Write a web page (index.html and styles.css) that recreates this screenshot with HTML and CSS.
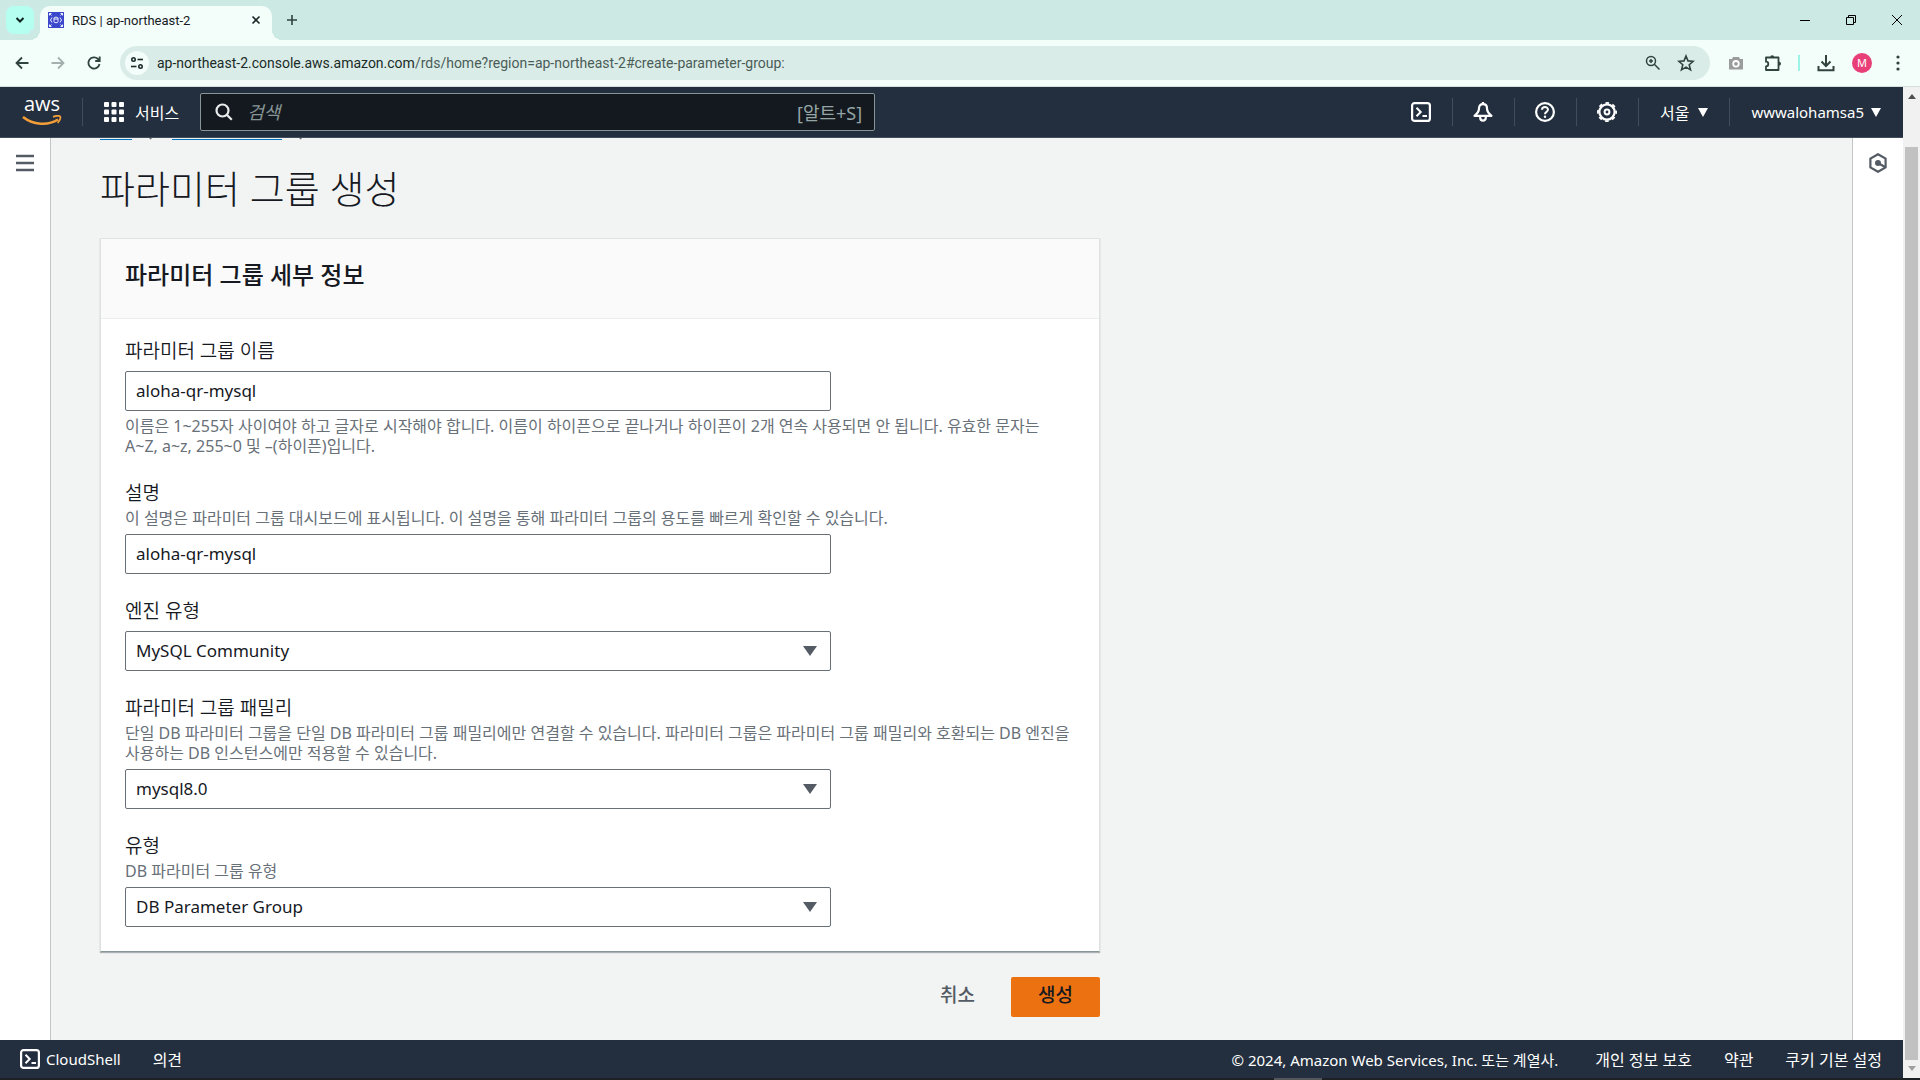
FILE: index.html
```html
<!DOCTYPE html>
<html lang="ko">
<head>
    <meta charset="UTF-8">
    <meta name="viewport" content="width=device-width, initial-scale=1.0">
    <title>RDS | ap-northeast-2</title>
    <link rel="stylesheet" href="styles.css">
</head>
<body>
    <!-- Browser tabs -->
    <div class="tab-strip">
        <button class="tab-search" aria-label="탭 검색">
            <svg width="10" height="10" viewBox="0 0 10 10"><path d="M1.5 3l3.500 3.500L8.500 3" fill="none" stroke="#10231f" stroke-width="2"/></svg>
        </button>
        <div class="tab">
            <svg width="16" height="16" viewBox="0 0 16 16">
                <rect width="16" height="16" fill="#3b48cc"/>
                <g fill="none" stroke="#fff">
                    <path d="M1.500 3.500v-2h2M12.500 1.500h2v2M14.500 12.500v2h-2M3.500 14.500h-2v-2M1.500 1.500l2 2M14.500 1.500l-2 2M14.500 14.500l-2-2M1.500 14.500l2-2" stroke-width=".9"/>
                    <path d="M4 5.500L2.500 8 4 10.500M12 5.500L13.500 8 12 10.500" stroke-width=".9"/>
                    <ellipse cx="8" cy="6.200" rx="2" ry="1" stroke-width=".9"/>
                    <path d="M6 6.200v3.600c0 1.300 4 1.300 4 0V6.200" stroke-width=".9"/>
                </g>
            </svg>
            <span class="tab-title">RDS | ap-northeast-2</span>
            <button class="icon-btn" aria-label="탭 닫기">
                <svg width="10" height="10" viewBox="0 0 10 10"><path d="M1.500 1.500l7 7M8.500 1.500l-7 7" stroke="#1b2b28" stroke-width="1.600"/></svg>
            </button>
        </div>
        <button class="icon-btn new-tab" aria-label="새 탭">
            <svg width="12" height="12" viewBox="0 0 12 12"><path d="M6 1v10M1 6h10" stroke="#30433f" stroke-width="1.600"/></svg>
        </button>
        <div class="window-controls">
            <button class="icon-btn" aria-label="최소화">
                <svg width="12" height="12" viewBox="0 0 12 12"><path d="M1 6.500h10" stroke="#000"/></svg>
            </button>
            <button class="icon-btn" aria-label="이전 크기로 복원">
                <svg width="12" height="12" viewBox="0 0 12 12"><path d="M1.500 3.500h7v7h-7zM3.500 3V1.500h7v7H9" fill="none" stroke="#000"/></svg>
            </button>
            <button class="icon-btn" aria-label="닫기">
                <svg width="12" height="12" viewBox="0 0 12 12"><path d="M1 1l10 10M11 1L1 11" stroke="#000"/></svg>
            </button>
        </div>
    </div>

    <!-- Address bar -->
    <div class="toolbar">
        <div class="nav-buttons">
            <button class="icon-btn" aria-label="뒤로">
                <svg width="16" height="16" viewBox="0 0 16 16"><path d="M14.500 8H3M8 2.500L2.500 8 8 13.500" fill="none" stroke="#30433f" stroke-width="1.800"/></svg>
            </button>
            <button class="icon-btn" aria-label="앞으로">
                <svg width="16" height="16" viewBox="0 0 16 16"><path d="M1.500 8H13M8 2.500L13.500 8 8 13.500" fill="none" stroke="#a3b0ad" stroke-width="1.800"/></svg>
            </button>
            <button class="icon-btn" aria-label="새로고침">
                <svg width="16" height="16" viewBox="0 0 16 16"><path d="M13.500 9A5.600 5.600 0 1 1 12 4l1.500 1.500M13.700 1.500v4.500H9.200" fill="none" stroke="#30433f" stroke-width="1.800"/></svg>
            </button>
        </div>
        <div class="address">
            <button class="site-info" aria-label="사이트 정보 보기">
                <svg width="14" height="14" viewBox="0 0 14 14"><g fill="none" stroke="#1b2b28" stroke-width="1.600"><circle cx="3.500" cy="3.500" r="1.700"/><path d="M7.500 3.500H13"/><circle cx="10.500" cy="10.500" r="1.700"/><path d="M1 10.500h5.500"/></g></svg>
            </button>
            <span class="url"><span class="host">ap-northeast-2.console.aws.amazon.com</span>/rds/home?region=ap-northeast-2#create-parameter-group:</span>
            <button class="icon-btn" aria-label="확대/축소">
                <svg width="16" height="16" viewBox="0 0 16 16"><g fill="none" stroke="#30433f" stroke-width="1.500"><circle cx="6" cy="6" r="4.500"/><path d="M9.300 9.300l5.200 5.200M6 4v4M4 6h4"/></g></svg>
            </button>
            <button class="icon-btn" aria-label="북마크에 추가">
                <svg width="18" height="18" viewBox="0 0 18 18"><path d="M9 2l2 4.900 5.200.4-4 3.400 1.300 5.200L9 13.100l-4.500 2.800 1.300-5.200-4-3.400L7 6.900z" fill="none" stroke="#30433f" stroke-width="1.600"/></svg>
            </button>
        </div>
        <button class="icon-btn camera" aria-label="화면 캡처">
            <svg width="16" height="16" viewBox="0 0 16 16"><path d="M1 4h3l1-2h6l1 2h3v10.500H1z" fill="#9a9d9c"/><circle cx="8" cy="8.800" r="2.800" fill="#9a9d9c" stroke="#fff" stroke-width="1.800"/></svg>
        </button>
        <button class="icon-btn puzzle" aria-label="확장 프로그램">
            <svg width="18" height="18" viewBox="0 0 18 18"><path d="M2 3.500h12.500V16H2v-3.700a2.300 2.300 0 0 0 0-4.600z" fill="none" stroke="#30433f" stroke-width="1.800" stroke-linejoin="round"/><path d="M6.200 3.200a2 2 0 0 1 4 0zM15 7.700a2 2 0 0 1 0 4z" fill="#30433f"/></svg>
        </button>
        <span class="toolbar-divider"></span>
        <button class="icon-btn download" aria-label="다운로드">
            <svg width="18" height="18" viewBox="0 0 18 18"><path d="M9 1v10.500M4.500 7.500L9 12l4.500-4.500M1.500 12v4.200h15V12" fill="none" stroke="#30433f" stroke-width="2"/></svg>
        </button>
        <button class="profile" aria-label="프로필">M</button>
        <button class="icon-btn" aria-label="Chrome 맞춤설정">
            <svg width="4" height="16" viewBox="0 0 4 16" fill="#30433f"><circle cx="2" cy="2" r="1.600"/><circle cx="2" cy="8" r="1.600"/><circle cx="2" cy="14" r="1.600"/></svg>
        </button>
    </div>

    <div class="viewport">
        <div class="console">
            <!-- AWS header -->
            <header class="aws-nav">
                <a href="#" class="aws-logo" aria-label="AWS">
                    <span class="aws-word">aws</span>
                    <svg width="40" height="12" viewBox="0 0 40 12"><path d="M1 2c10 8 25 9 35 2.500" fill="none" stroke="#f29d38" stroke-width="2.600"/><path d="M31 1.800c3-1 6-1.300 7-.4s0 4-2.300 6.600" fill="none" stroke="#f29d38" stroke-width="1.800"/></svg>
                </a>
                <span class="nav-divider"></span>
                <button class="services">
                    <svg width="20" height="20" viewBox="0 0 20 20" fill="#fff"><rect width="5" height="5" rx="1"/><rect x="7.500" width="5" height="5" rx="1"/><rect x="15" width="5" height="5" rx="1"/><rect y="7.500" width="5" height="5" rx="1"/><rect x="7.500" y="7.500" width="5" height="5" rx="1"/><rect x="15" y="7.500" width="5" height="5" rx="1"/><rect y="15" width="5" height="5" rx="1"/><rect x="7.500" y="15" width="5" height="5" rx="1"/><rect x="15" y="15" width="5" height="5" rx="1"/></svg>
                    서비스
                </button>
                <label class="search">
                    <svg width="18" height="18" viewBox="0 0 18 18"><g fill="none" stroke="#eaeded" stroke-width="2.200"><circle cx="7.500" cy="7.500" r="6"/><path d="M11.800 11.800l5 5"/></g></svg>
                    <input type="text" placeholder="검색" aria-label="검색">
                    <span class="shortcut">[알트+S]</span>
                </label>
                <div class="nav-tools">
                    <button class="tool" aria-label="CloudShell">
                        <svg width="20" height="20" viewBox="0 0 20 20"><g fill="none" stroke="#fff" stroke-width="2.200"><rect x="1.100" y="1.100" width="17.800" height="17.800" rx="2.500"/><path d="M5.500 5.800l4.200 4.200-4.200 4.200" stroke-width="2"/><path d="M11.500 14h4.500" stroke-width="2"/></g></svg>
                    </button>
                    <button class="tool" aria-label="알림">
                        <svg width="20" height="20" viewBox="0 0 20 20"><g fill="none" stroke="#fff" stroke-width="2.200" stroke-linejoin="round"><path d="M10 2.200c-2.600 0-4 1.600-4 4.200 0 3.200-1.600 5-4.500 7.400h17c-2.900-2.400-4.500-4.200-4.500-7.400 0-2.600-1.400-4.200-4-4.200z"/><path d="M7.200 14.500v1.200c0 3.800 5.600 3.800 5.600 0v-1.200M10 0v2"/></g></svg>
                    </button>
                    <button class="tool" aria-label="도움말">
                        <svg width="20" height="20" viewBox="0 0 20 20"><circle cx="10" cy="10" r="8.900" fill="none" stroke="#fff" stroke-width="2.200"/><path d="M7 7.800C7 4.200 13 4.200 13 7.600c0 2.400-3 2.100-3 4.600" fill="none" stroke="#fff" stroke-width="2"/><circle cx="10" cy="14.700" r="1.200" fill="#fff"/></svg>
                    </button>
                    <button class="tool" aria-label="설정">
                        <svg width="20" height="20" viewBox="0 0 20 20"><circle cx="10" cy="10" r="7.600" fill="none" stroke="#fff" stroke-width="2.200"/><circle cx="10" cy="10" r="9.100" fill="none" stroke="#fff" stroke-width="1.800" stroke-dasharray="3.600 3.547" stroke-dashoffset="1.800"/><circle cx="10" cy="10" r="2.400" fill="none" stroke="#fff" stroke-width="2"/></svg>
                    </button>
                    <button class="menu region">서울
                        <svg width="10" height="9" viewBox="0 0 10 9"><path d="M0 0h10L5 9z" fill="#fff"/></svg>
                    </button>
                    <button class="menu account">wwwalohamsa5
                        <svg width="10" height="9" viewBox="0 0 10 9"><path d="M0 0h10L5 9z" fill="#fff"/></svg>
                    </button>
                </div>
            </header>

            <div class="workspace">
                <aside class="rail rail-left">
                    <button class="icon-btn" aria-label="탐색 열기">
                        <svg width="18" height="18" viewBox="0 0 18 18"><path d="M0 2h18M0 9h18M0 16h18" stroke="#545b64" stroke-width="2.400"/></svg>
                    </button>
                </aside>

                <main class="content">
                    <nav class="breadcrumb" aria-label="이동 경로">
                        <a href="#" class="crumb-home" aria-label="RDS"></a>
                        <svg width="8" height="12" viewBox="0 0 8 12"><path d="M2 1l4 5-4 5" fill="none" stroke="#687078" stroke-width="2"/></svg>
                        <a href="#" class="crumb-groups" aria-label="파라미터 그룹"></a>
                        <svg width="8" height="12" viewBox="0 0 8 12"><path d="M2 1l4 5-4 5" fill="none" stroke="#687078" stroke-width="2"/></svg>
                    </nav>
                    <h1>파라미터 그룹 생성</h1>

                    <form class="group-form">
                        <section class="card">
                            <h2>파라미터 그룹 세부 정보</h2>
                            <div class="card-body">
                                <div class="field">
                                    <label for="groupName">파라미터 그룹 이름</label>
                                    <input type="text" id="groupName" value="aloha-qr-mysql">
                                    <p class="hint">이름은 1~255자 사이여야 하고 글자로 시작해야 합니다. 이름이 하이픈으로 끝나거나 하이픈이 2개 연속 사용되면 안 됩니다. 유효한 문자는 A~Z, a~z, 255~0 및 –(하이픈)입니다.</p>
                                </div>
                                <div class="field">
                                    <label for="description">설명</label>
                                    <p class="hint">이 설명은 파라미터 그룹 대시보드에 표시됩니다. 이 설명을 통해 파라미터 그룹의 용도를 빠르게 확인할 수 있습니다.</p>
                                    <input type="text" id="description" value="aloha-qr-mysql">
                                </div>
                                <div class="field">
                                    <label for="engine">엔진 유형</label>
                                    <div class="select">
                                        <select id="engine"><option>MySQL Community</option></select>
                                        <svg width="14" height="10" viewBox="0 0 14 10"><path d="M0 0h14L7 10z" fill="#545b64"/></svg>
                                    </div>
                                </div>
                                <div class="field">
                                    <label for="family">파라미터 그룹 패밀리</label>
                                    <p class="hint">단일 DB 파라미터 그룹을 단일 DB 파라미터 그룹 패밀리에만 연결할 수 있습니다. 파라미터 그룹은 파라미터 그룹 패밀리와 호환되는 DB 엔진을 사용하는 DB 인스턴스에만 적용할 수 있습니다.</p>
                                    <div class="select">
                                        <select id="family"><option>mysql8.0</option></select>
                                        <svg width="14" height="10" viewBox="0 0 14 10"><path d="M0 0h14L7 10z" fill="#545b64"/></svg>
                                    </div>
                                </div>
                                <div class="field">
                                    <label for="groupType">유형</label>
                                    <p class="hint">DB 파라미터 그룹 유형</p>
                                    <div class="select">
                                        <select id="groupType"><option>DB Parameter Group</option></select>
                                        <svg width="14" height="10" viewBox="0 0 14 10"><path d="M0 0h14L7 10z" fill="#545b64"/></svg>
                                    </div>
                                </div>
                            </div>
                        </section>
                        <div class="actions">
                            <button type="button" class="btn">취소</button>
                            <button type="button" class="btn btn-primary">생성</button>
                        </div>
                    </form>
                </main>

                <aside class="rail rail-right">
                    <button class="icon-btn" aria-label="도구 열기">
                        <svg width="20" height="20" viewBox="0 0 20 20"><path d="M10 1.200l7.600 4.400v8.800L10 18.800l-7.600-4.400V5.600z" fill="none" stroke="#545b64" stroke-width="2.200"/><circle cx="10" cy="10" r="3" fill="#545b64"/><path d="M10 10l7 4" stroke="#545b64" stroke-width="2.200"/></svg>
                    </button>
                </aside>
            </div>

            <footer class="aws-footer">
                <button class="cloudshell">
                    <svg width="20" height="20" viewBox="0 0 20 20"><g fill="none" stroke="#fff" stroke-width="2.200"><rect x="1.100" y="1.100" width="17.800" height="17.800" rx="2.500"/><path d="M5.500 5.800l4.200 4.200-4.200 4.200" stroke-width="2"/><path d="M11.500 14h4.500" stroke-width="2"/></g></svg>
                    CloudShell
                </button>
                <a href="#">의견</a>
                <span class="copyright">© 2024, Amazon Web Services, Inc. 또는 계열사.</span>
                <a href="#">개인 정보 보호</a>
                <a href="#">약관</a>
                <a href="#">쿠키 기본 설정</a>
            </footer>
        </div>

        <div class="scrollbar">
            <svg width="8" height="5" viewBox="0 0 8 5"><path d="M0 5h8L4 0z" fill="#505050"/></svg>
            <div class="thumb"></div>
            <svg width="8" height="5" viewBox="0 0 8 5"><path d="M0 0h8L4 5z" fill="#a0a0a0"/></svg>
        </div>
    </div>

    <div class="taskbar"><span></span></div>
</body>
</html>
```
FILE: styles.css
```css
* {
    box-sizing: border-box;
}
body {
    margin: 0;
    height: 100vh;
    display: flex;
    flex-direction: column;
    overflow: hidden;
    background: #f3fdf9;
    color: #16191f;
    font-family: "Noto Sans", "Noto Sans CJK KR", sans-serif;
    font-size: 16px;
}
button, input, select {
    font: inherit;
    color: inherit;
}
button {
    border: none;
    padding: 0;
    background: none;
    cursor: pointer;
}
svg {
    display: block;
    flex: none;
}
.icon-btn {
    display: flex;
    align-items: center;
    justify-content: center;
}

/* Browser tabs */
.tab-strip {
    flex: none;
    height: 40px;
    display: flex;
    align-items: center;
    background: #cde9e3;
}
.tab-search {
    width: 28px;
    height: 28px;
    margin-left: 6px;
    display: flex;
    align-items: center;
    justify-content: center;
    border-radius: 8px;
    background: #b4fff0;
}
.tab {
    align-self: flex-end;
    position: relative;
    width: 232px;
    height: 34px;
    margin-left: 6px;
    padding: 0 11px 6px 8px;
    display: flex;
    align-items: center;
    gap: 8px;
    border-radius: 10px 10px 0 0;
    background: #f3fdf9;
}
.tab::before,
.tab::after {
    content: "";
    position: absolute;
    bottom: 0;
    width: 10px;
    height: 10px;
}
.tab::before {
    left: -10px;
    background: radial-gradient(circle at 0 0, #cde9e3 10px, #f3fdf9 10px);
}
.tab::after {
    right: -10px;
    background: radial-gradient(circle at 100% 0, #cde9e3 10px, #f3fdf9 10px);
}
.tab-title {
    flex: 1;
    font-family: Roboto, sans-serif;
    font-size: 13px;
}
.new-tab {
    margin-left: 14px;
}
.window-controls {
    margin-left: auto;
    margin-right: 17px;
    display: flex;
    gap: 34px;
}

/* Address bar */
.toolbar {
    flex: none;
    height: 47px;
    padding: 0 20px 1px 14px;
    display: flex;
    align-items: center;
    border-bottom: 1px solid #d5e0dd;
}
.nav-buttons {
    display: flex;
    gap: 20px;
}
.address {
    flex: 1;
    height: 34px;
    margin-left: 18px;
    padding: 0 15px 0 5px;
    display: flex;
    align-items: center;
    gap: 16px;
    border-radius: 17px;
    background: #daece7;
}
.site-info {
    width: 24px;
    height: 24px;
    margin-right: -8px;
    display: flex;
    align-items: center;
    justify-content: center;
    border-radius: 50%;
    background: #f3fdf9;
}
.url {
    flex: 1;
    font-family: Roboto, sans-serif;
    font-size: 14px;
    color: #4a5c58;
}
.host {
    color: #1b2b28;
}
.camera {
    margin-left: 18px;
}
.puzzle {
    margin-left: 20px;
}
.toolbar-divider {
    width: 2px;
    height: 16px;
    margin-left: 16px;
    background: #9cf3e6;
}
.download {
    margin-left: 17px;
}
.profile {
    width: 20px;
    height: 20px;
    margin: 0 24px 0 17px;
    border-radius: 50%;
    background: #e93f78;
    color: #fff;
    font-size: 11px;
    line-height: 20px;
}

/* Page area */
.viewport {
    flex: 1;
    min-height: 0;
    display: flex;
}
.console {
    flex: 1;
    min-width: 0;
    display: flex;
    flex-direction: column;
}

/* AWS header */
.aws-nav {
    flex: none;
    height: 51px;
    padding: 0 22px;
    display: flex;
    align-items: center;
    background: #232f3e;
    border-bottom: 1px solid #414d5c;
    color: #fff;
}
.aws-logo {
    width: 40px;
    display: flex;
    flex-direction: column;
    align-items: center;
    color: #fff;
    text-decoration: none;
}
.aws-word {
    height: 18px;
    font-family: "Open Sans", sans-serif;
    font-size: 20px;
    font-weight: 500;
    line-height: 14px;
}
.nav-divider {
    width: 1px;
    height: 28px;
    margin-left: 20px;
    background: #414d5c;
}
.services {
    margin: 0 21px 0 21px;
    display: flex;
    align-items: center;
    gap: 11px;
}
.search {
    width: 675px;
    height: 38px;
    padding: 0 12px 0 14px;
    display: flex;
    align-items: center;
    gap: 14px;
    border: 1px solid #879596;
    border-radius: 2px;
    background: #14191f;
}
.search input {
    flex: 1;
    min-width: 0;
    padding: 0;
    border: none;
    outline: none;
    background: none;
    font-size: 18px;
    font-style: italic;
}
.search input::placeholder {
    color: #879596;
}
.shortcut {
    font-size: 18px;
    color: #95a5a6;
}
.nav-tools {
    margin-left: auto;
    display: flex;
    align-items: center;
}
.tool,
.menu {
    height: 28px;
    display: flex;
    align-items: center;
    justify-content: center;
}
.tool {
    width: 62px;
    border-right: 1px solid #414d5c;
}
.menu {
    gap: 9px;
}
.region {
    padding: 0 21px;
    border-right: 1px solid #414d5c;
}
.account {
    gap: 7px;
    padding-left: 21px;
    font-size: 15px;
}

/* Console body */
.workspace {
    flex: 1;
    min-height: 0;
    display: flex;
    background: #f2f3f3;
}
.rail {
    flex: none;
    width: 51px;
    padding-top: 15px;
    background: #fff;
}
.rail .icon-btn {
    width: 50px;
    height: 20px;
}
.rail-left {
    border-right: 1px solid #c2c6c8;
}
.rail-right {
    border-left: 1px solid #c2c6c8;
}
.content {
    flex: 1;
    min-width: 0;
    padding: 0 49px;
    overflow: hidden;
}
.breadcrumb {
    height: 24px;
    margin-top: -22px;
    display: flex;
    align-items: flex-end;
    gap: 16px;
}
.breadcrumb a {
    height: 24px;
    border-bottom: 1px solid #0073bb;
}
.crumb-home {
    width: 32px;
}
.crumb-groups {
    width: 110px;
}
h1 {
    margin: 24px 0 26px;
    font-size: 38px;
    font-weight: 300;
    line-height: 48px;
}
.group-form {
    max-width: 1000px;
}
.card {
    background: #fff;
    border: 1px solid #dfe3e4;
    border-bottom-color: #879596;
    box-shadow: 0 1px 1px rgba(0, 28, 36, 0.3);
}
.card h2 {
    margin: 0;
    padding: 20px 24px 27px;
    background: #fafafa;
    border-bottom: 1px solid #eaeded;
    font-size: 24px;
    font-weight: 500;
    line-height: 32px;
}
.card-body {
    padding: 20px 24px 24px;
    display: flex;
    flex-direction: column;
    gap: 25px;
}
.field {
    display: flex;
    flex-direction: column;
}
.field label {
    margin-bottom: 3px;
    font-size: 19px;
    font-weight: 350;
    line-height: 24px;
}
.field input,
.field .select {
    width: 706px;
    max-width: 100%;
    height: 40px;
}
.field input,
.field select {
    padding: 0 10px 2px;
    border: 1px solid #687078;
    border-radius: 2px;
    background: #fff;
    font-size: 17px;
}
.field label + input,
.field label + .select {
    margin-top: 5px;
}
.select {
    position: relative;
}
.field select {
    width: 100%;
    height: 100%;
    appearance: none;
}
.select svg {
    position: absolute;
    right: 14px;
    top: 15px;
    pointer-events: none;
}
.hint {
    margin: 0 0 6px;
    padding-right: 2px;
    color: #687078;
    font-size: 16px;
    line-height: 20px;
}
input + .hint {
    margin: 5px 0 0;
}
.actions {
    margin-top: 25px;
    display: flex;
    justify-content: flex-end;
    gap: 9px;
}
.btn {
    height: 40px;
    padding: 0 27px 6px;
    border-radius: 2px;
    color: #545b64;
    font-size: 19px;
    font-weight: 500;
}
.btn-primary {
    background: #ec7211;
    color: #16191f;
}

/* AWS footer */
.aws-footer {
    flex: none;
    height: 38px;
    padding: 0 21px 0 20px;
    display: flex;
    align-items: center;
    gap: 32px;
    background: #232f3e;
    color: #fff;
}
.aws-footer a {
    color: #fff;
    text-decoration: none;
}
.cloudshell {
    display: flex;
    align-items: center;
    gap: 6px;
    font-size: 15px;
}
.copyright {
    margin-left: auto;
    margin-right: 5px;
    font-size: 15px;
}

.scrollbar {
    flex: none;
    width: 17px;
    padding: 7px 2px;
    display: flex;
    flex-direction: column;
    align-items: center;
    background: #f1f1f1;
}
.thumb {
    flex: 1;
    width: 13px;
    margin: 48px 0 6px;
    background: #c1c1c1;
}
.taskbar {
    flex: none;
    height: 2px;
    padding-left: 1274px;
    background: #1e2124;
}
.taskbar span {
    display: block;
    width: 48px;
    height: 2px;
    background: #55585b;
}
```
